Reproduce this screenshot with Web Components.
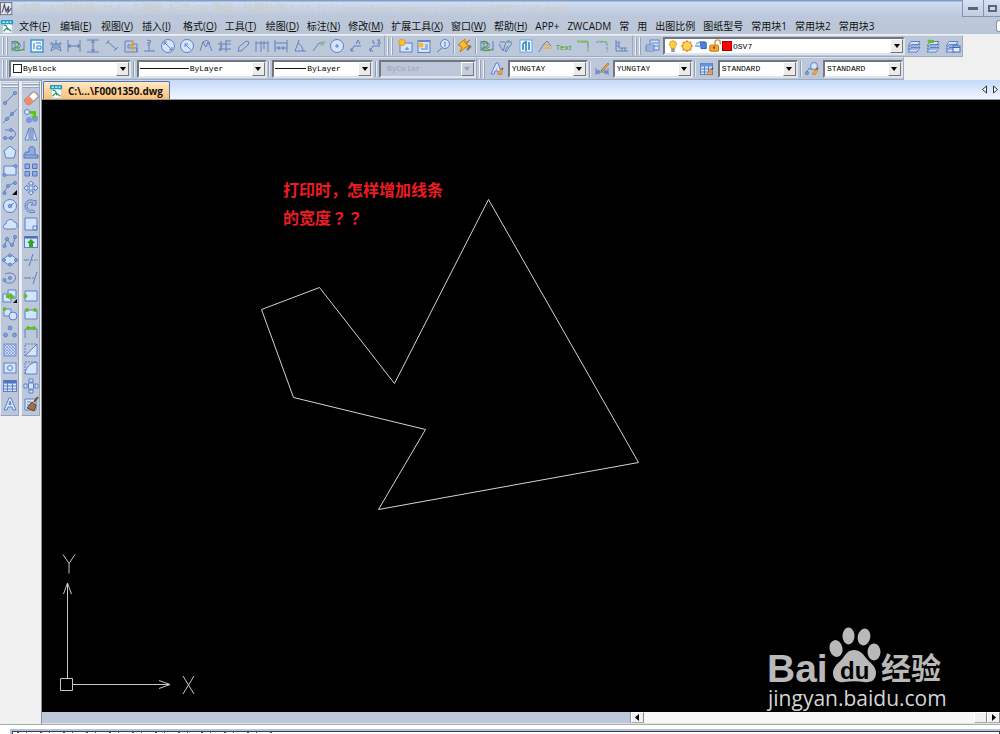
<!DOCTYPE html>
<html lang="zh-CN">
<head>
<meta charset="utf-8">
<title>中望CAD机械版2014</title>
<style>
html, body { margin: 0; height: 100%; background: #f0f0f0; overflow: hidden; }
</style>
</head>
<body>
<cad-app></cad-app>
<script>
const B = 'fill="none" stroke="#6180bd" stroke-width="1"';
const F = 'fill="#d3e4ff" stroke="#6080c0" stroke-width="1"';
const G = 'fill="#62c01c"';
const dot = (x, y, r = 1.6) => `<circle cx="${x}" cy="${y}" r="${r}" fill="#7ba0e8" stroke="#4a69ad" stroke-width=".6"/>`;
const gdot = (x, y) => `<circle cx="${x}" cy="${y}" r="1.9" ${G}/>`;
const brush = '<path d="M14 7l-3 3" stroke="#6b4a2c" stroke-width="1.5"/><path d="M12 8l2 2-3 4-3-1z" fill="#f2a43a" stroke="#c6701c" stroke-width=".5"/>';
const layers = `<path d="M4 9.500h9l-3 4.500H1zM4 6.500h9l-3 4.500H1zM4 3.500h9l-3 4.500H1z" ${F} stroke-linejoin="round"/>`;
const ICONS = {
  app: '<rect x=".5" y=".5" width="13" height="14" fill="#e3e4ef" stroke="#686879"/><path d="M2 12C4 9 4 6 5 3l2 8 3-6-1 7 4-5" fill="none" stroke="#4b4d67" stroke-width="1.300"/>',
  dwg: '<path d="M3 5h8l3 2v9H3z" fill="#fff" stroke="#b1c0cb" stroke-width=".7"/><rect x="1" y="1" width="14" height="5" rx="1" fill="#1d9bcb"/><path d="M3 3.500h10" stroke="#fff" stroke-width="1.500" stroke-dasharray="2.500 1.500"/><path d="M4 7c4 0 4 2 5 6M4 14l4-4 5 4" stroke="#26966c" stroke-width="1.300" fill="none"/>',
  smart: `<path d="M2 3v10M2 5h6a2.500 2.500 0 0 1 0 5H5M5 5v8M8 10l3 3M14 3v10" ${B}/><path d="M2 4c5-2 8 1 6 4s-5 1-5 3 7 2 11 0" fill="none" stroke="#49a33c" stroke-width="1.300"/>`,
  frame: '<rect x="2" y="2" width="12" height="12" fill="#eafaff" stroke="#3c94dd" stroke-width="1.500"/><path d="M5 5v6M7 5h5M8 8h4v3H8z" fill="none" stroke="#3779c0"/>',
  star: `<path d="M2 6h12M4 9h9M8 2v4M5 7l-2 6 5-3 5 3-2-6zM3 4l2 2M13 4l-2 2" ${B}/>`,
  hdim: `<path d="M2 2v12M14 2v12M2 8h12M2 8l2-1.500v3zM14 8l-2-1.500v3z" ${B}/>`,
  vdim: `<path d="M2 2h12M2 14h12M8 2v12M6.500 5L8 2l1.500 3M6.500 11L8 14l1.500-3" ${B}/>`,
  adim: `<path d="M4 4l8 7M2 6l3-4M10 13l4-4" ${B} stroke-width="1.500"/>`,
  bolt: `<path d="M2 3h8v4H5v3h9v4H2zM9 6h5v8" ${B}/><path d="M10 2v12M7 8h4" stroke="#f1a12b" stroke-width="1.300"/>`,
  weld: `<path d="M6 2l4 1-3 5M8 7v6M3 13h11M6 5h3" ${B}/>`,
  dia: `<circle cx="8" cy="8" r="6.500" ${F}/><path d="M4 4l8 8M4 4h3M4 4v3M12 12h-3M12 12V9" ${B} stroke-width="1.300"/>`,
  rad: `<circle cx="8" cy="8" r="6.500" ${F}/><path d="M6 6l6 6M6 6h3M6 6v3" ${B} stroke-width="1.300"/>`,
  curve: `<path d="M2 13L5 4l3 5 2-5 4 9M5 4c3-2 6-2 7 2" ${B}/>`,
  grid: `<path d="M1 6h13M2 11h12M4 3v10M9 2v12M9 3h5" ${B} stroke-width="1.300"/><path d="M2 13l3-6" ${B}/>`,
  pencil: `<path d="M3 13l1-4 7-6 3 1-1 3-7 6z" ${B} stroke-width="1.300"/>`,
  multi: `<path d="M2 3v11M7 3v11M14 3v11M2 5h12M10 3v8" ${B}/>`,
  chain: `<path d="M2 2v12M14 2v12M2 5h12M2 10h12M6 8v4M10 8v4" ${B}/>`,
  angle: `<path d="M7 2L3 13h11M6 5c3 2 5 5 5 8" ${B} stroke-width="1.300"/>`,
  leader: `<path d="M2 13l6-8h5" ${B} stroke-width="1.300"/><path d="M10 4h5M9 7h4" stroke="#88b884"/>`,
  circ: `<circle cx="8" cy="8" r="6.500" ${F}/><path d="M8 6v4M6 8h4" ${B}/>`,
  lead2: `<path d="M3 13l3-5h7M3 13v-3M3 13h3M8 6l2-4 2 4" ${B} stroke-width="1.300"/>`,
  l3: `<path d="M3 13l3-5h7M3 13v-3M3 13h3" ${B} stroke-width="1.300"/><path d="M6 2v3h2M10 2h3L11 4h2v2h-3" ${B}/>`,
  sheet: `<rect x="3" y="5" width="12" height="9" ${F}/><circle cx="5" cy="4.500" r="3.300" fill="#ffbc31" stroke="#d58512" stroke-width=".6"/><path d="M8 11h4M10 9v3" ${B}/>`,
  sheet2: `<rect x="2" y="2.500" width="12" height="12" ${F}/><path d="M3 3h11" stroke="#6786c7" stroke-width="2"/><circle cx="5" cy="7" r="2.500" fill="#ffb622"/><path d="M9 7h3M9 9h3M5 11h7" ${B}/>`,
  magn: `<circle cx="10" cy="6" r="4.500" ${F}/><path d="M7 10l-5 4M9 5l1-1v5" ${B} stroke-width="1.500"/>`,
  flash: '<path d="M8 1L1 7l4 2-2 5 6-5 4-1-4-2 4-4-5 3z" fill="#ffbd2b" stroke="#bd7b17"/><path d="M10 12l4-4" stroke="#887151" stroke-width="2"/>',
  rough: `<path d="M1 6l4 7 3-9h6M2 4h5M10 8l-3 4 1 2 6-9" ${B} stroke-width="1.400"/><path d="M9 3h3" stroke="#52a74a"/>`,
  panel: '<rect x="2" y="2" width="12" height="12" fill="#eafaff" stroke="#62a9df"/><path d="M5 12V6l2-2M8 3v10M11 4v8" stroke="#2f78bf" stroke-width="1.500" fill="none"/>',
  arch: `<path d="M2 14l4-7 4-4 4 5" ${B}/><path d="M7 7h6M6 10h9" stroke="#ebad4b" stroke-width="1.500"/>`,
  corner1: '<path d="M2 4h11v10M7 4h6v6" fill="none" stroke="#76a795"/><path d="M2 3h11" stroke="#75c83f"/>',
  corner2: '<path d="M2 4h11v10" fill="none" stroke="#6c94b8" stroke-dasharray="3 1"/><path d="M5 3l8 1" stroke="#75c83f"/>',
  base: `<path d="M3 2v11h12M6 3v7h8M3 5h3M3 8h3M9 10v3M12 10v3" ${B}/>`,
  layer: layers,
  laymgr: `<rect x="5" y="2" width="9" height="10" ${F}/><path d="M6 5h7M6 8h7" ${B}/><path d="M1 7h8v6H1zM1 9h8M1 11h8" ${F}/>`,
  layprev: layers + '<path d="M1 3l3-2v1h4v3H4v1z" fill="#64bd27"/>',
  laystate: layers + '<rect x="8" y="8" width="7" height="6" fill="#e1edff" stroke="#3f69b7"/><path d="M8 9.500h7" stroke="#3f69b7"/>',
  bulb: '<path d="M4 6a4 4 0 1 1 8 0c0 2-2 3-2 5H6c0-2-2-3-2-5z" fill="#ffcc42" stroke="#d99b1d"/><path d="M6 12h4M6 14h4" stroke="#7e8da3" stroke-width="1.500"/>',
  sun: '<path d="M8 1l2 2 3 0 0 3 2 2-2 2 0 3-3 0-2 2-2-2-3 0 0-3-2-2 2-2 0-3 3 0z" fill="#e3871e"/><circle cx="8" cy="8" r="4.500" fill="#ffd454"/>',
  vp: '<path d="M7 4h7v7H8z" fill="#4c82e0" stroke="#2f559f"/><path d="M1 8h7M2 6l5-3h6" fill="none" stroke="#79a0de" stroke-width="1.500"/>',
  lock: '<path d="M8 8V4a3 3 0 0 1 6 0v2" fill="none" stroke="#d29a40" stroke-width="1.700"/><rect x="2" y="7" width="10" height="7" rx="1" fill="#ffa61f" stroke="#b36a0c"/><circle cx="7" cy="10" r="1.300" fill="#744708"/>',
  tstyle: `<path d="M2 13L7 2h2l4 11h-3l-1-3H6l-1 3zM7 8h1" ${F}/>${brush}`,
  dstyle: `<path d="M2 7v7M14 7v7M2 11h12M2 11l3-2v4zM14 11l-3-2v4z" ${B} stroke-width="1.400"/><path d="M14 2L8 8l-1 2 3-1 5-6z" fill="#f2a43a" stroke="#9a6b39" stroke-width=".7"/>`,
  table: `<rect x="1.500" y="2.500" width="13" height="11" ${F}/><path d="M2 4h12" stroke="#4a75c5" stroke-width="3"/><path d="M2 8h12M2 11h12M5.500 5v8M10.500 5v8" ${B}/>`,
  tabstyle: `<rect x="1.500" y="2.500" width="12" height="11" ${F}/><path d="M2 4h11" stroke="#6793df" stroke-width="3"/><path d="M2 8h11M2 11h11M5.500 5v8M9.500 5v8" ${B}/>${brush}`,
  mlstyle: `<circle cx="10" cy="5" r="3.500" ${F}/><path d="M2 13l3-6 3 2" ${B}/>${dot(3, 12)}${brush}`,
  line: `<path d="M3 13L13 3" ${B} stroke-width="1.300"/>${dot(3, 13)}${dot(13, 3)}`,
  xline: `<path d="M1 15L15 1" ${B}/>${dot(5, 11)}${dot(10, 6)}`,
  pline: `<path d="M3 4h6c6 0 6 8 0 8H3" ${B} stroke-width="1.600"/>${dot(3, 12)}${dot(9, 12)}${dot(9, 4)}`,
  poly: `<path d="M8 2l6 5-2 7H4L2 7z" ${F}/>`,
  rect: `<path d="M2 4h12v9H2z" ${F}/>${dot(2.500, 13)}${dot(13.500, 4)}`,
  arc: `<path d="M2 14c1-5 5-10 11-11" ${B}/>${dot(2.500, 13)}${dot(6, 6)}${dot(13, 3)}<path d="M15 10v5h-5z"/>`,
  circle: `<circle cx="8" cy="8" r="6.500" ${F}/><path d="M8 8l4-3" ${B}/>${dot(8, 8, 1.8)}`,
  cloud: `<path d="M3 13c-3-2-1-5 1-5 0-5 7-6 8-2 4 0 4 6 1 7z" ${F}/>`,
  spline: `<path d="M2 13l3-8 5 7 4-10" ${B}/>${dot(2.500, 12)}${dot(5, 5)}${dot(10, 11)}${dot(13, 3)}`,
  ellipse: `<ellipse cx="8" cy="8" rx="6" ry="4.500" ${F}/>${dot(2, 8)}${dot(14, 8)}${dot(8, 3.500)}${dot(8, 12.500)}`,
  earc: `<path d="M3 4c6-3 13 1 10 6-2 4-9 4-11 1" ${B} stroke-width="1.400"/>${dot(2.500, 10)}${dot(8, 8)}`,
  insert: `<path d="M1 6h8v8H1zM6 2h8v8H6z" ${F}/><path d="M4 7h4V5l5 3.500L8 12v-2H4z" ${G}/><path d="M15 11v4h-4z"/>`,
  block: `<path d="M2 3h7v7H2z" ${F}/><circle cx="11" cy="10" r="4" ${F}/>${gdot(2.500, 3)}`,
  point: dot(8, 4, 2) + dot(3.500, 11, 2) + dot(12.500, 11, 2),
  hatch: '<rect x="2" y="2" width="12" height="12" fill="#c9dafa" stroke="#6e8fce"/><path d="M2 5l3-3M2 8l6-6M2 11l9-9M2 14L14 2M5 14l9-9M8 14l6-6M11 14l3-3M2 11l3 3M2 8l6 6M2 5l9 9M2 2l12 12M5 2l9 9M8 2l6 6M11 2l3 3" stroke="#6e8fce" stroke-width=".6"/>',
  region: `<rect x="2" y="3" width="12" height="10" ${F}/><circle cx="8" cy="8" r="2.500" ${F}/>`,
  mtext: `<path d="M2 14L7 2h2l5 12h-3l-1-3H6l-1 3zM7 8.500h2L8 5z" ${F}/>`,
  erase: '<g transform="rotate(-42 8 8)"><rect x="1" y="5" width="14" height="7" rx="2" fill="#fff" stroke="#a67d76"/><path d="M1 7q0-2 2-2h5v7H3q-2 0-2-2z" fill="#f18a6c"/></g>',
  copy: `<circle cx="4" cy="4" r="2.500" ${F}/><circle cx="6" cy="12" r="3" fill="#7897e4"/><circle cx="12" cy="11" r="3" fill="#7897e4"/><path d="M7 3h6v5h2l-4 3-3-3h2V6H7z" ${G}/>`,
  mirror: `<path d="M6 2v12H2zM10 2v12h4z" ${F}/><path d="M8 1v14" ${B}/>`,
  offset: `<path d="M1 14h14v-3h-3V6c0-5-7-4-6 0v2H4c-3 0-3 3-3 3z" fill="#8fabdf" stroke="#5474b6"/><path d="M2 11h10" ${B} stroke-width="1.500"/>`,
  array: `<path d="M2 2h4.500v4.500H2zM9.500 2H14v4.500H9.500zM2 9.500h4.500V14H2zM9.500 9.500H14V14H9.500z" fill="#91adf0" stroke="#5474b6"/>`,
  move: `<path d="M8 1l3 3H9v3h3V5l3 3-3 3V9H9v3h2l-3 3-3-3h2V9H4v2L1 8l3-3v2h3V4H5z" ${F} stroke-width=".8"/>`,
  rotate: `<path d="M13 2v5H8l2-2C7 3 4 5 4 8s3 5 6 4l2 2C7 16 2 13 2 8s5-8 9-5z" fill="#a9c1ee" stroke="#6080c0"/>`,
  scale: `<path d="M2 2h12v12H2zM10 10h4v4h-4z" ${F}/>`,
  stretch: `<rect x="1.500" y="2.500" width="13" height="11" ${F}/><path d="M2 3.500h12" stroke="#486bb2" stroke-width="2"/><path d="M8 5l4 4h-2v4H6V9H4z" fill="#35a51b"/>`,
  trim: `<path d="M1 8h5M10 2L6 14" ${B} stroke-width="1.300"/><path d="M8 8h7" ${B} stroke-dasharray="2 1"/>`,
  extend: `<path d="M1 8h6M14 2l-4 12" ${B} stroke-width="1.300"/><path d="M6 8h6" ${B} stroke-dasharray="2 1"/>`,
  brk1: `<path d="M2 3h12v10H2z" ${F}/>${gdot(2.500, 8)}`,
  brk2: `<path d="M2 4h12v9H2z" ${F}/>${gdot(4, 4)}${gdot(12, 4)}`,
  join: `<path d="M2 14V5h12v9" ${B}/>${gdot(5, 4)}${gdot(11, 4)}<path d="M5 4h6" stroke="#62c01c" stroke-width="2"/>`,
  chamfer: `<path d="M2 14L14 2v12z" ${F}/><path d="M2 14V2h12" ${B} stroke-dasharray="2 1"/>`,
  fillet: `<path d="M2 14C3 7 7 3 14 2v12z" ${F}/><path d="M2 14V2h12" ${B} stroke-dasharray="2 1"/>`,
  explode: `<path d="M5.500 5h5v6h-5zM6 1h4v3H6zM6 12h4v3H6zM1 6h3v4H1zM12 6h3v4h-3z" ${F}/>`,
  match: `<path d="M2 3h11v11H2z" ${F}/><path d="M4 6h4M4 9h3" ${B}/><path d="M15 1l-4 5" stroke="#6b4a2c" stroke-width="2"/><path d="M9 6l4 3-2 6-7-3z" fill="#9d7149" stroke="#67411f"/>`,
};

class CadElement extends HTMLElement {
  constructor() { super(); this.attachShadow({ mode: 'open' }); }
  connectedCallback() { this.shadowRoot.innerHTML = this.render(); }
}

customElements.define('cad-icon', class extends CadElement {
  render() {
    return `<style>:host{display:block;flex:none;width:14px;height:14px}svg{display:block;width:100%;height:100%}</style>
    <svg viewBox="0 0 16 16" aria-hidden="true">${ICONS[this.getAttribute('name')]}</svg>`;
  }
});

customElements.define('cad-tool', class extends CadElement {
  render() {
    const name = this.getAttribute('name');
    return `<style>
      :host{display:block;flex:none}
      button{display:grid;place-items:center;width:100%;height:100%;padding:0;border:0;background:none;color:#36a020;font:8px "Open Sans",sans-serif}
      cad-icon{width:16px;height:16px}
    </style><button aria-label="${name}">${name === 'text' ? 'Text' : `<cad-icon name="${name}"></cad-icon>`}</button>`;
  }
});

customElements.define('cad-bar', class extends CadElement {
  render() {
    return `<style>
      :host{display:flex;align-items:center;box-sizing:border-box;height:100%;background:#bcc8da;border-right:1px solid #a0abbc;border-bottom:1px solid #a0abbc;border-top:1px solid #dde4ee}
      .grip{flex:none;width:2px;height:18px;margin-left:2px;border-left:1px solid #eef2f8;border-right:1px solid #97a3b8;box-sizing:border-box}
      .tools{display:flex;flex:1;align-items:center;justify-content:space-between;margin-left:var(--inset,3px);height:100%}
    </style><i class="grip"></i><i class="grip"></i><div class="tools"><slot></slot></div>`;
  }
});

customElements.define('cad-select', class extends CadElement {
  render() {
    const off = this.hasAttribute('disabled') ? 'disabled' : '';
    return `<style>
      :host{display:flex;align-items:center;box-sizing:border-box;height:18px;background:#fff;border:2px solid;border-color:#717780 #dfe5ee #dfe5ee #717780;padding-left:1px;font:8px "Liberation Mono",monospace;color:#000}
      :host([disabled]){background:#bcc8da;color:#98a3b4;padding-left:5px}
      select{appearance:none;flex:1;min-width:0;height:14px;border:0;margin:0;padding:0 1px;background:none;font:inherit;color:inherit;opacity:1}
      .arrow{flex:none;display:grid;place-items:center;width:11px;height:12px;background:#ecebea;border:1px solid;border-color:#fff #777 #777 #fff;box-sizing:content-box}
      :host([disabled]) .arrow{background:#c5cedc}
      .arrow::after{content:"";border:3px solid transparent;border-top:4px solid currentColor;border-bottom:0}
    </style><slot></slot><select ${off} aria-label="${this.getAttribute('label')}"><option>${this.getAttribute('value')}</option></select><span class="arrow"></span>`;
  }
});

customElements.define('cad-menu', class extends CadElement {
  render() {
    const keyed = [['文件', 'F'], ['编辑', 'E'], ['视图', 'V'], ['插入', 'I'], ['格式', 'O'], ['工具', 'T'], ['绘图', 'D'], ['标注', 'N'], ['修改', 'M'], ['扩展工具', 'X'], ['窗口', 'W'], ['帮助', 'H']];
    const plain = ['APP+', 'ZWCADM', '常', '用', '出图比例', '图纸型号', '常用块1', '常用块2', '常用块3'];
    return `<style>
      :host{display:flex;align-items:center;height:17px;background:linear-gradient(#bdc9db,#bac5d6);border-bottom:1px solid #eceff3;font:10px/16px "Open Sans","Noto Sans CJK SC",sans-serif;color:#101010}
      cad-icon{margin:0 5px 0 0}
      nav{display:flex;gap:8px;flex:1}
      button{padding:0;border:0;background:none;font:inherit;color:inherit;white-space:nowrap}
      .k{min-width:33px;text-align:left}
      .mdi{width:4px;height:12px;background:#fff;border:1px solid #8d96a5;border-right:0;border-radius:3px 0 0 3px}
    </style><cad-icon name="dwg"></cad-icon><nav>${keyed.map(([t, k]) => `<button class="k">${t}(<u>${k}</u>)</button>`).join('')}${plain.map(t => `<button>${t}</button>`).join('')}</nav><button class="mdi" aria-label="最小化文档"></button>`;
  }
});

customElements.define('cad-title', class extends CadElement {
  render() {
    return `<style>
      :host{display:flex;align-items:center;height:17px;overflow:hidden;background:linear-gradient(#7f9fcb 0 1px,#d1dcef 2px,#bac7db)}
      h1{flex:1;margin:0 0 0 5px;font:11px/16px "Open Sans","Noto Sans CJK SC",sans-serif;color:#cdccca;white-space:pre}
      button{align-self:stretch;box-sizing:border-box;width:22px;padding:0;border:1px solid #8596b3;border-top:0;margin-right:-1px;background:linear-gradient(#d6e1f2,#bfcde2);display:grid;place-items:center}
      .max{width:17px;margin-right:0;border-right:0}
      .min i{width:10px;height:3px;background:#5d6674}
      .max i{width:5px;height:3px;border:2px solid #5d6674}
    </style><cad-icon name="app"></cad-icon><h1>中望CAD机械版2014 - 主图幅  标准:GB 图幅:[ 绘图比例 1:1] - [C:\\Users\\Administrator\\Desktop\\F0001350.dwg]</h1>
    <button class="min" aria-label="最小化"><i></i></button><button class="max" aria-label="最大化"><i></i></button>`;
  }
});

const tools = (s) => s.split(' ').map(n => `<cad-tool name="${n}"></cad-tool>`).join('');

customElements.define('cad-toolbars', class extends CadElement {
  render() {
    return `<style>
      :host{display:block;background:#f0f0f0}
      .row{display:flex;height:22px}
      .row+.row{height:23px}
      cad-tool{width:18px;height:18px}
      .a{width:385px}.b{width:248px}.c{width:330px}
      .a,.b,.c,.d,.e{flex:none}
      .d{width:477px}.e{width:427px}
      .a,.d{--inset:1px}
      .b{padding-right:2px}
      .sep{width:1px;height:16px;background:#929eb3;border-right:1px solid #e5ebf4}
      .box{width:7px;height:7px;border:1px solid #222;background:#fff;margin-left:1px}
      .sw{width:8px;height:8px;background:#f00;border:1px solid #a00}
      .ln{height:1px;background:#111}
      .lt{width:49px}.lw{width:31px}
    </style>
    <div class="row">
      <cad-bar class="a">${tools('smart frame star hdim vdim adim bolt weld dia rad curve grid pencil multi chain angle leader circ lead2 l3')}</cad-bar>
      <cad-bar class="b">${tools('sheet sheet2 magn')}<i class="sep"></i>${tools('flash')}<i class="sep"></i>${tools('smart rough panel arch text corner1 corner2 base')}</cad-bar>
      <cad-bar class="c">${tools('laymgr')}
        <cad-select label="图层" value="OSV7" style="width:242px"><cad-icon name="bulb"></cad-icon><cad-icon name="sun"></cad-icon><cad-icon name="vp"></cad-icon><cad-icon name="lock"></cad-icon><span class="sw"></span></cad-select>
        ${tools('layer layprev laystate')}</cad-bar>
    </div>
    <div class="row">
      <cad-bar class="d">
        <cad-select label="颜色" value="ByBlock" style="width:122px"><span class="box"></span></cad-select><i class="sep"></i>
        <cad-select label="线型" value="ByLayer" style="width:130px"><span class="ln lt"></span></cad-select><i class="sep"></i>
        <cad-select label="线宽" value="ByLayer" style="width:101px"><span class="ln lw"></span></cad-select><i class="sep"></i>
        <cad-select label="打印颜色" value="ByColor" disabled style="width:97px"></cad-select></cad-bar>
      <cad-bar class="e">
        ${tools('tstyle')}<cad-select label="文字样式" value="YUNGTAY" style="width:80px"></cad-select><i class="sep"></i>
        ${tools('dstyle')}<cad-select label="标注样式" value="YUNGTAY" style="width:80px"></cad-select><i class="sep"></i>
        ${tools('tabstyle')}<cad-select label="表格样式" value="STANDARD" style="width:80px"></cad-select><i class="sep"></i>
        ${tools('mlstyle')}<cad-select label="引线样式" value="STANDARD" style="width:80px"></cad-select></cad-bar>
    </div>`;
  }
});

customElements.define('cad-palette', class extends CadElement {
  render() {
    return `<style>
      :host{display:flex;flex-direction:column;align-items:center;box-sizing:border-box;width:19px;background:#bcc8da;border:1px solid;border-color:#dde4ee #98a4b7 #98a4b7 #e4eaf3}
      .grip{width:16px;height:2px;margin-top:1px;background:#edf1f7;border-bottom:1px solid #97a3b8;box-sizing:border-box}
      .tools{display:block;padding:1px 0 2px}
      cad-tool{width:17px;height:18px}
    </style><i class="grip"></i><i class="grip"></i><div class="tools">${tools(this.getAttribute('tools'))}</div>`;
  }
});

customElements.define('cad-tabs', class extends CadElement {
  render() {
    return `<style>
      :host{display:flex;align-items:flex-end;height:20px;padding-left:1px;box-sizing:border-box;background:linear-gradient(#c5dafb,#f1f6ff);border-bottom:1px solid #8e959e}
      .tab{display:flex;align-items:center;gap:5px;height:18px;width:127px;box-sizing:border-box;padding:0 5px;border:1px solid #5174ae;border-bottom:0;border-radius:2px 2px 0 0;background:linear-gradient(#ffe8c6,#fdc171);font:bold 10px/16px "Open Sans",sans-serif;color:#111;white-space:nowrap}
      .sp{flex:1}
      .nav{width:10px;height:19px;padding:0;border:0;background:none;display:grid;place-items:center}
      svg{display:block}
    </style><button class="tab"><cad-icon name="dwg"></cad-icon>C:\\...\\F0001350.dwg</button><span class="sp"></span>
    <button class="nav" aria-label="上一个"><svg width="6" height="9"><path d="M4.500 1v7L.5 4.500z" fill="#fff" stroke="#333"/></svg></button>
    <button class="nav" aria-label="下一个"><svg width="6" height="9"><path d="M1.500 1v7l4-3.500z" fill="#fff" stroke="#333"/></svg></button>`;
  }
});

customElements.define('cad-canvas', class extends CadElement {
  render() {
    return `<style>
      :host{display:block;position:relative;overflow:hidden;background:#000}
      svg{position:absolute;display:block}
      .draw{left:0;top:0}.ucs{left:0;bottom:0}.logo{right:52px;bottom:0}
      p{position:absolute;left:241px;top:75px;margin:0;font:bold 16px/28px "Noto Sans CJK SC",sans-serif;color:#ed1c24}
      .q{font-family:"Noto Sans CJK TC",sans-serif}
    </style>
    <svg class="draw" width="700" height="450" fill="none" stroke="#d4d4d4"><path d="M446.500 99.500L596.500 362.500 336.500 409.500 383.500 329.500 251.500 297.500 219.500 209.500 277.500 187.500 352.500 283.500z"/></svg>
    <p>打印时，怎样增加线条<br>的宽度<span class="q" lang="zh-TW">？？</span></p>
    <svg class="ucs" width="170" height="170" fill="none" stroke="#c8c8c8"><path d="M18.500 136.500h12v12h-12zM25.500 136V41M21.500 52l4-11 4 11M31 142.500h97M117 138.500l11 4-11 4M21 12.500l6 9 6-9M27 21.500v10M141 134l11 18M152 134l-11 18"/></svg>
    <svg class="logo" width="182" height="90" viewBox="0 0 182 90" fill="#b9b9b9" font-family="Liberation Sans" font-weight="bold">
      <text x="1" y="60" font-size="39">Bai</text>
      <ellipse cx="70" cy="26.500" rx="6.500" ry="8.500" transform="rotate(-12 70 26.500)"/><ellipse cx="82.500" cy="14" rx="6" ry="8.500"/><ellipse cx="98" cy="15" rx="6.300" ry="8.500" transform="rotate(12 98 15)"/><ellipse cx="108" cy="30" rx="6.500" ry="8.500"/>
      <path d="M88 28c-6 0-8 4-11 8-4 5-10 8-10 15 0 7 5 10 11 9 7-1 14-1 20 0 7 1 12-2 12-9 0-7-6-10-10-15-3-4-6-8-12-8z"/>
      <text x="74" y="57" font-size="24" fill="#000">du</text>
      <text x="115" y="57" font-size="30" font-family="Noto Sans CJK SC">经验</text>
      <text x="2" y="84" font-size="21" font-weight="400" font-family="Open Sans" fill="#d4d4d4">jingyan.baidu.com</text>
    </svg>`;
  }
});

customElements.define('cad-scroll', class extends CadElement {
  render() {
    return `<style>
      :host{display:flex;height:12px;background:#f7f7f7;border-bottom:1px solid #e4e4e4;box-sizing:border-box}
      .layouts{flex:8;box-sizing:border-box;border-right:1px solid #8e9bb2;background:#bcc8da}
      .track{flex:4.500}
      button{width:13px;padding:0;border:1px solid;border-color:#fff #888 #aaa #fff;background:#f0f0f0;display:grid;place-items:center}
      svg{display:block}
    </style><div class="layouts"></div><button aria-label="向左滚动"><svg width="4" height="7"><path d="M4 0v7L0 3.500z"/></svg></button><div class="track"></div><button aria-label="滑块"></button><button aria-label="向右滚动"><svg width="4" height="7"><path d="M0 0v7l4-3.500z"/></svg></button>`;
  }
});

customElements.define('cad-command', class extends CadElement {
  render() {
    return `<style>
      :host{display:block;height:9px;overflow:hidden;background:#fff;border-top:1px solid #aaa}
      .frame{height:9px;margin:4px 0 0 10px;padding:2px 0 0 2px;background:#b4c2d9}
      textarea{display:block;box-sizing:border-box;width:100%;height:20px;resize:none;border:1px solid #3e4248;border-bottom:0;padding:0;outline:0;border-radius:0;background:#fff repeating-linear-gradient(90deg,#555 0 2px,transparent 2px 9px,#555 9px 10px,transparent 10px 23px) no-repeat 4px 0/260px 1px}
    </style><div class="frame"><textarea aria-label="命令行" readonly></textarea></div>`;
  }
});

customElements.define('cad-app', class extends CadElement {
  render() {
    return `<style>
      :host{display:flex;flex-direction:column;height:100vh;background:#f0f0f0}
      .work{flex:1;display:flex;min-height:0}
      .side{flex:none;display:flex;align-items:flex-start;gap:2px;width:42px;box-sizing:border-box;border-right:1px solid #8b8f96;border-top:1px solid #a0abbc}
      .doc{flex:1;min-width:0;display:flex;flex-direction:column}
      cad-canvas{flex:1}
      cad-command{flex:none}
    </style>
    <cad-title></cad-title><cad-menu></cad-menu><cad-toolbars></cad-toolbars>
    <div class="work">
      <div class="side">
        <cad-palette tools="line xline pline poly rect arc circle cloud spline ellipse earc insert block point hatch region table mtext"></cad-palette>
        <cad-palette tools="erase copy mirror offset array move rotate scale stretch trim extend brk1 brk2 join chamfer fillet explode match"></cad-palette>
      </div>
      <div class="doc"><cad-tabs></cad-tabs><cad-canvas></cad-canvas><cad-scroll></cad-scroll></div>
    </div>
    <cad-command></cad-command>`;
  }
});
</script>
</body>
</html>
